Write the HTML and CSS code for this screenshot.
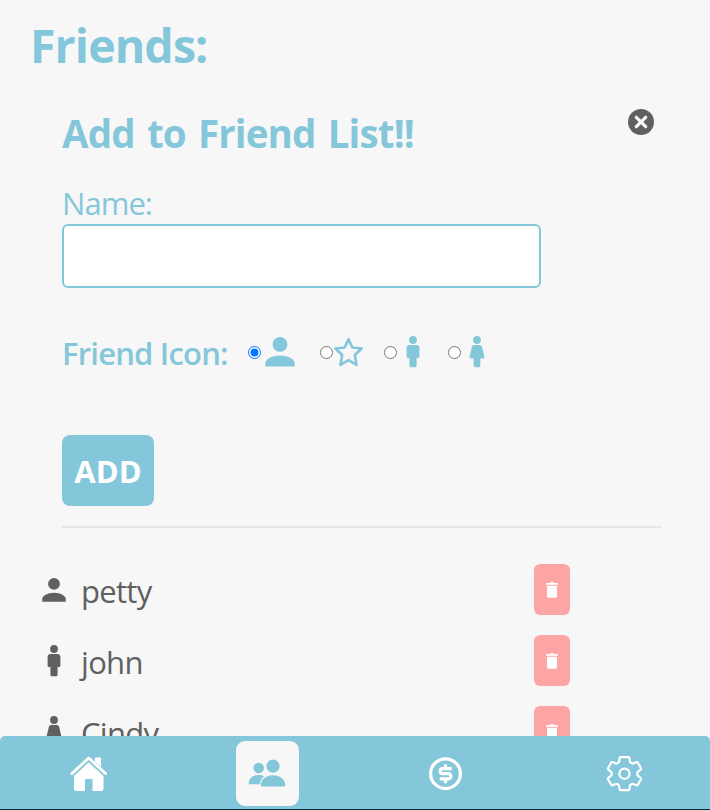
FILE: index.html
```html
<!DOCTYPE html>
<html lang="en">
<head>
<meta charset="utf-8">
<title>Friends</title>
<link rel="stylesheet" href="styles.css">
</head>
<body>
<svg class="defs" aria-hidden="true">
  <symbol id="person" viewBox="0 0 30 30"><circle cx="15" cy="7.4" r="7.4"/><path d="M.3 29.6v-3.2c0-4.2 6.2-8 14.7-8s14.7 3.8 14.7 8v3.2z"/></symbol>
  <symbol id="man" viewBox="0 0 14 32"><circle cx="7" cy="4" r="3.9"/><path d="M3.6 9h6.8a3 3 0 0 1 3 3v8.600a1.500 1.500 0 0 1-2.800.8v8.300a1.500 1.500 0 0 1-1.500 1.500H4.900a1.500 1.500 0 0 1-1.500-1.500v-8.300a1.500 1.500 0 0 1-2.800-.8V12a3 3 0 0 1 3-3z"/></symbol>
  <symbol id="woman" viewBox="0 0 16 32"><circle cx="8" cy="4" r="3.9"/><path d="M5 9h6q1.600 0 2.100 1.800l2.300 9.600q.5 2-1.300 2.200h-2.800v7.200q0 1.400-1.300 1.400h-4q-1.300 0-1.300-1.400v-7.200H1.900Q.1 22.400.6 20.400L2.900 10.800Q3.400 9 5 9z"/></symbol>
  <symbol id="trash" viewBox="0 0 12 16"><path d="M0 2a1 1 0 0 1 1-1h2.700L4.500.3h3L8.300 1H11a1 1 0 0 1 1 1v.7H0zM1 3.700h10v10.800a1.300 1.300 0 0 1-1.300 1.300H2.300A1.300 1.300 0 0 1 1 14.500z"/></symbol>
</svg>

<main class="page">
  <h1 class="title">Friends:</h1>

  <form class="panel">
    <header class="panel-head">
      <h2 class="panel-title">Add to Friend List!!</h2>
      <svg class="close" viewBox="0 0 26 26"><circle cx="13" cy="13" r="13"/><path d="M8.300 8.300l9.400 9.400M17.700 8.300l-9.400 9.400"/></svg>
    </header>
    <label class="name-label" for="name">Name:</label>
    <input class="name-input" id="name" type="text">
    <div class="choices">
      <span class="choices-label">Friend Icon:</span>
      <label class="choice"><input type="radio" name="icon" checked><svg class="i-person"><use href="#person"/></svg></label>
      <label class="choice star"><input type="radio" name="icon"><svg class="i-star" viewBox="0 0 30 30"><path d="M14.500 2.300l3.800 8.200 9.300 1-6.800 6.500 1.700 9.800-8-4.700-8 4.700 1.700-9.800-6.800-6.500 9.300-1z"/></svg></label>
      <label class="choice man"><input type="radio" name="icon"><svg class="i-man"><use href="#man"/></svg></label>
      <label class="choice woman"><input type="radio" name="icon"><svg class="i-woman"><use href="#woman"/></svg></label>
    </div>
    <button class="add" type="button">ADD</button>
  </form>

  <ul class="friends">
    <li class="friend"><span class="avatar"><svg class="a-person"><use href="#person"/></svg></span><span class="who">petty</span><button class="remove" type="button"><svg><use href="#trash"/></svg></button></li>
    <li class="friend"><span class="avatar"><svg class="i-man"><use href="#man"/></svg></span><span class="who">john</span><button class="remove" type="button"><svg><use href="#trash"/></svg></button></li>
    <li class="friend"><span class="avatar"><svg class="i-woman"><use href="#woman"/></svg></span><span class="who">Cindy</span><button class="remove" type="button"><svg><use href="#trash"/></svg></button></li>
  </ul>
</main>

<nav class="tabs">
  <a class="tab"><svg class="home" viewBox="0 0 38 36"><path d="M4 18.500L18.800 5 33.500 18.500V32.500a2.500 2.500 0 0 1-2.500 2.500H22.500V23h-7.500V35H6.500A2.500 2.500 0 0 1 4 32.500z"/><path d="M25 1.500H31v11l-6-6z"/><path class="gap" d="M2 18.500L18.700 3 35.500 18.500"/><path class="roof" d="M2 17.500L18.700 2 35.500 17.500"/></svg></a>
  <a class="tab current"><svg class="people" viewBox="0 0 38 30"><circle cx="10.700" cy="9" r="5.300"/><path d="M.7 24.200c0-5 4.500-8.300 10-8.300 2 0 4 .4 5.500 1.300-2.500 1.700-4 4.300-4.400 8H1.700q-1 0-1-1z"/><circle cx="25" cy="7.200" r="6.600"/><path d="M12.800 26.200c0-5.500 5-9.900 12.200-9.900s12.200 4.400 12.200 9.900q0 1.200-1.200 1.200H14q-1.200 0-1.200-1.200z"/></svg></a>
  <a class="tab"><svg class="money" viewBox="0 0 34 34"><circle cx="16.500" cy="16.700" r="14.900"/><path d="M16.500 7.200v4M16.500 22.200v4M22.800 11.700H13.700a2.500 2.500 0 0 0 0 5h5.600a2.500 2.500 0 0 1 0 5.100H10.700"/></svg></a>
  <a class="tab"><svg class="gear" viewBox="0 0 36 36"><path d="M14.500 1.200h8q.8 0 .9.800l.5 3.600q.1.700.7 1l1.300.8q.6.400 1.200.1l3.500-1.400q.7-.3 1.100.4l3.300 5.700q.4.700-.2 1.200l-2.900 2.400q-.6.500-.6 1.200v1.400q0 .7.600 1.200l2.900 2.400q.6.500.2 1.200l-3.300 5.700q-.4.700-1.100.4l-3.500-1.400q-.6-.3-1.200.1l-1.300.8q-.6.300-.7 1l-.5 3.600q-.1.800-.9.800h-8q-.8 0-.9-.8l-.5-3.600q-.1-.7-.7-1l-1.300-.8q-.6-.4-1.200-.1l-3.500 1.400q-.7.300-1.100-.4L2 23.200q-.4-.7.200-1.200l2.900-2.400q.6-.5.600-1.200V17q0-.7-.6-1.200l-2.900-2.400q-.6-.5-.2-1.200l3.300-5.700q.4-.7 1.100-.4l3.500 1.400q.6.300 1.200-.1l1.300-.8q.6-.3.700-1l.5-3.600q.1-.8.900-.8z"/><circle cx="18.500" cy="17.700" r="5.100"/></svg></a>
</nav>
</body>
</html>
```
FILE: styles.css
```css
* { box-sizing: border-box; }
html, body { height: 100%; }
body {
  margin: 0;
  overflow: hidden;
  background: #f7f7f7;
  color: #606060;
  font-family: "Open Sans", "Noto Sans", sans-serif;
  font-size: 31px;
}
svg { display: block; flex: none; fill: currentColor; }
.defs { position: absolute; width: 0; height: 0; }
.page { height: 810px; overflow: hidden; padding-top: 12px; }
.title, .panel-title, .name-label, .choices { color: #85c7da; }
.title {
  margin: 0 0 0 30px;
  font-size: 46.500px;
  line-height: 66px;
  font-weight: 700;
  letter-spacing: -.9px;
}
.panel {
  display: flex;
  flex-direction: column;
  margin: 28px 49px 0 62px;
  height: 422px;
  border-bottom: 2px solid #e5e5e5;
}
.panel-head { display: flex; justify-content: space-between; height: 76px; }
.panel-title {
  margin: 0;
  font-size: 38.500px;
  line-height: 54px;
  font-weight: 700;
  letter-spacing: -.85px;
  word-spacing: 3px;
  white-space: nowrap;
}
.close { width: 26px; height: 26px; margin: 3px 7px 0 0; color: #606060; }
.close path { stroke: #f7f7f7; stroke-width: 3.2; stroke-linecap: round; }
.name-label { line-height: 40px; height: 42px; letter-spacing: -.95px; padding-top: 1px; }
.name-input {
  width: 479px;
  height: 64px;
  border: 2px solid #85c7da;
  border-radius: 6px;
  background: #fff;
  outline: none;
}
.choices { display: flex; height: 64px; margin-top: 32px; align-items: center; }
.choices-label {
  width: 186px;
  font-weight: 600;
  line-height: 44px;
  letter-spacing: -.8px;
  white-space: nowrap;
  padding-top: 1px;
}
.choice { display: flex; align-items: center; width: 72px; }
.choice input { margin: 0; width: 13px; height: 13px; flex: none; }
.choice.star, .choice.man, .choice.woman { width: 64px; }
.i-person { width: 30px; height: 30px; margin-left: 4px; }
.i-star { width: 30px; height: 30px; fill: none; stroke: currentColor; stroke-width: 2.7; stroke-linejoin: round; margin-left: 1px; }
.i-man { width: 14px; height: 32px; }
.i-woman { width: 16px; height: 32px; }
.choice .i-man { margin-left: 9px; }
.choice .i-woman { margin-left: 8px; }
.add {
  width: 92px;
  height: 71px;
  margin-top: 51px;
  padding: 1px 0 0;
  border: 0;
  border-radius: 8px;
  background: #85c7da;
  color: #fff;
  font: 700 31px/44px "Open Sans", sans-serif;
}
.friends { list-style: none; margin: 36px 0 0; padding: 0; display: grid; gap: 20px; }
.friend { display: flex; height: 51px; padding-left: 34px; align-items: center; }
.avatar { width: 39px; height: 32px; display: flex; justify-content: center; align-items: center; margin-right: 8px; }
.a-person { width: 24px; height: 24px; }
.who { width: 453px; line-height: 44px; padding-top: 2px; letter-spacing: -.7px; }
.remove {
  display: grid;
  place-items: center;
  width: 36px;
  height: 51px;
  padding: 0;
  border: 0;
  border-radius: 6px;
  background: #fda5a5;
  color: #fff;
}
.remove svg { width: 12px; height: 16px; }
.tabs {
  position: fixed;
  left: 0;
  right: 0;
  bottom: 0;
  height: 74px;
  display: flex;
  justify-content: space-between;
  padding: 5px 54px 3px 57px;
  border-radius: 5px 5px 0 0;
  border-bottom: 1px solid #062e3d;
  background: #85c7da;
  color: #fff;
}
.tab { width: 63px; height: 65px; display: grid; place-items: center; border-radius: 9px; }
.current { background: #f7f7f7; color: #85c7da; }
.home { width: 38px; height: 36px; }
.home .roof { fill: none; stroke: #fff; stroke-width: 3; stroke-linecap: round; stroke-linejoin: round; }
.home .gap { fill: none; stroke: #85c7da; stroke-width: 5; }
.people { width: 38px; height: 30px; }
.money { width: 34px; height: 34px; fill: none; stroke: #fff; stroke-width: 3.2; }
.gear { width: 36px; height: 36px; fill: none; stroke: #fff; stroke-width: 2.2; stroke-linejoin: round; }
```
